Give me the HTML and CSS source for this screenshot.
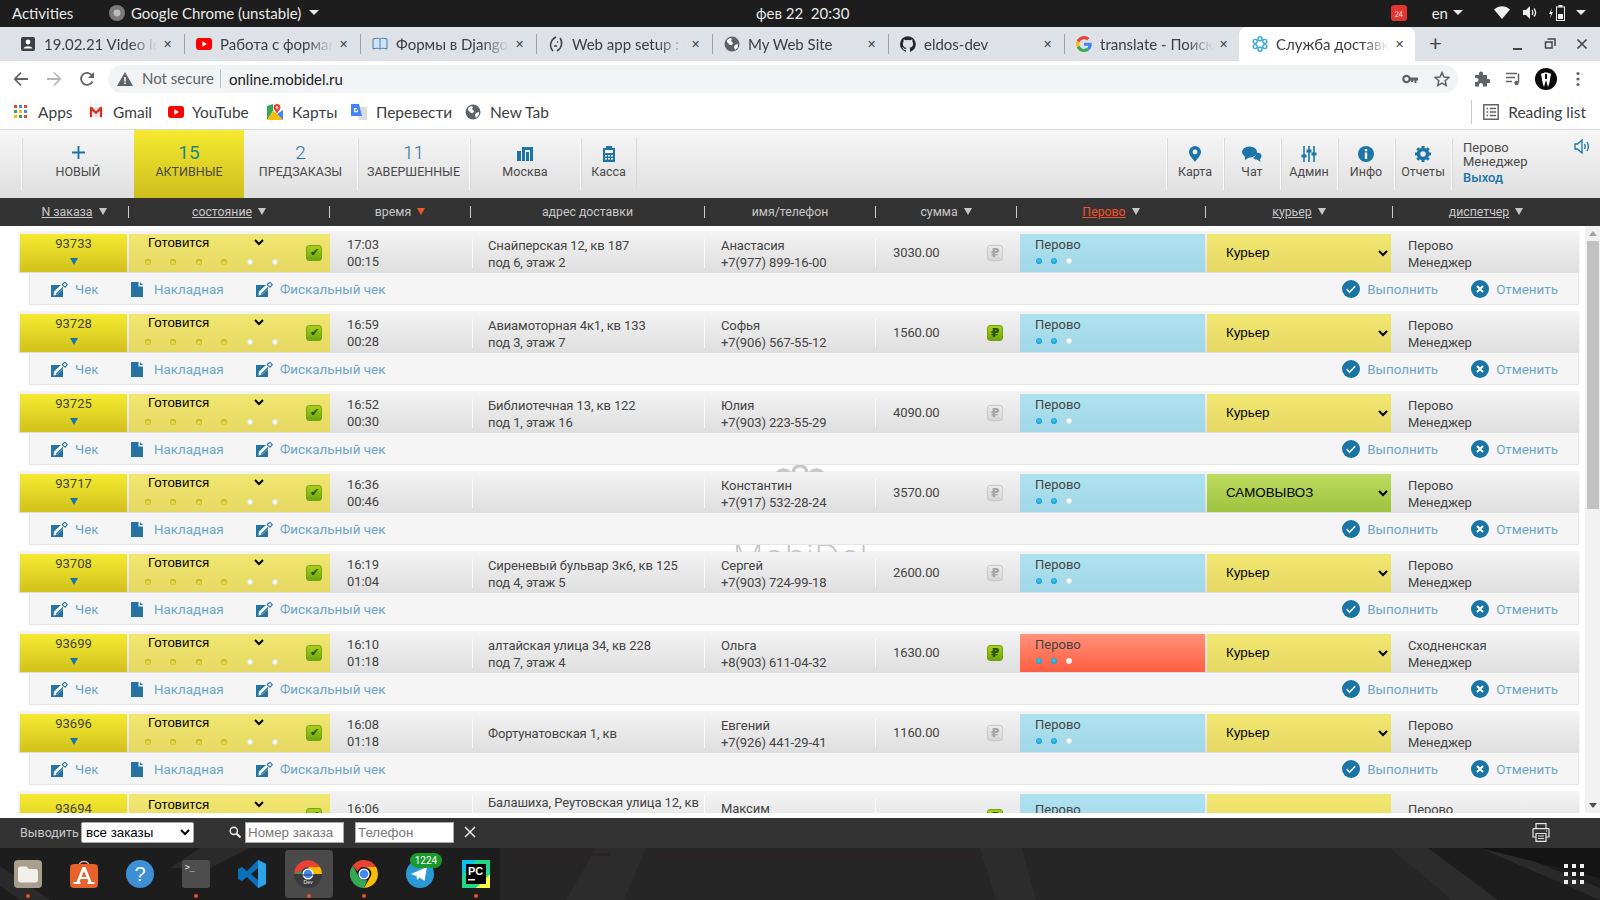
FILE: index.html
```html
<!DOCTYPE html>
<html lang="ru">
<head>
<meta charset="utf-8">
<title>Служба доставки</title>
<link rel="stylesheet" href="styles.css">
</head>
<body>
<svg class="defs" aria-hidden="true">
  <symbol id="i-edit" viewBox="0 0 17 15"><path fill="#2573a5" d="M0 3h12v12H0z"/><path fill="#fff" d="M3 9.500L11 2l3 2.800-8 8-3.500.8z"/><path fill="none" stroke="#2573a5" stroke-width="1.100" d="M11 2.500l3-2.200 2.300 2.400-2.300 2.600-3-2.800M5 12.500l7-7"/></symbol>
  <symbol id="i-doc" viewBox="0 0 12 15"><path fill="#2573a5" d="M0 0h7.500v4.500H12V15H0zM9 0l3 3H9z"/></symbol>
  <symbol id="i-ok" viewBox="0 0 18 18"><circle cx="9" cy="9" r="9" fill="#1a75a5"/><path fill="none" stroke="#fff" stroke-width="1.600" d="M4.600 9.200l3 3 5.600-6"/></symbol>
  <symbol id="i-no" viewBox="0 0 18 18"><circle cx="9" cy="9" r="9" fill="#1a75a5"/><path fill="none" stroke="#fff" stroke-width="2" d="M6 6l6 6M12 6l-6 6"/></symbol>
  <symbol id="i-globe" viewBox="0 0 16 16"><circle cx="8" cy="8" r="7.500" fill="#5f6368"/><path fill="#fff" d="M3 4l3-2 2 1-1 2 2 2-1 2-2 0-3-3zM11 9l3-1 0 3-3 3-1-3z"/></symbol>
  <symbol id="i-yt" viewBox="0 0 16 16"><rect y="2" width="16" height="12" rx="3" fill="#f00"/><path fill="#fff" d="M6.400 5.200L11 8l-4.600 2.800z"/></symbol>
</svg>

<header class="os-bar">
  <span class="os-act">Activities</span>
  <svg class="os-app-ico" viewBox="0 0 16 16"><circle cx="8" cy="8" r="8" fill="#7a7a7a"/><circle cx="8" cy="8" r="3.400" fill="#bbb"/></svg>
  <span class="os-app">Google Chrome (unstable)</span>
  <i class="os-tri os-tri-app"></i>
  <time class="os-clock">фев 22&nbsp; 20:30</time>
  <span class="os-right">
    <span class="os-badge">24</span>
    <span class="os-lang">en</span><i class="os-tri os-tri-lang"></i>
    <svg class="os-wifi" viewBox="0 0 16 13"><path fill="#eee" d="M0 3.500C4.500-1 11.500-1 16 3.500L8 13z"/></svg>
    <svg class="os-vol" viewBox="0 0 15 13"><path fill="#eee" d="M0 4h3l4-4v13L3 9H0z"/><path fill="none" stroke="#eee" stroke-width="1.300" d="M9 4c1 1.500 1 3.500 0 5M11 2.500c2 2.500 2 5.500 0 8"/></svg>
    <svg class="os-bat" viewBox="0 0 18 16"><path fill="#eee" d="M3 3L0 9h2l-1 4 3-6H2l1-4z"/><rect x="7.500" y="2" width="8" height="13.500" fill="none" stroke="#eee"/><rect x="9.500" y="0" width="4" height="2" fill="#eee"/><rect x="9" y="9" width="5" height="5" fill="#eee"/></svg>
    <i class="os-tri os-tri-end"></i>
  </span>
</header>

<nav class="tabs">
  <div class="tab">
    <svg class="fav" viewBox="0 0 16 16"><rect x="1" y="1" width="14" height="14" rx="2" fill="#3c4043"/><circle cx="8" cy="6" r="2.400" fill="#fff"/><path fill="#fff" d="M3.500 12.500c1-3 8-3 9 0z"/></svg>
    <span class="tab-title">19.02.21 Video lesson</span><span class="tab-x">✕</span>
  </div>
  <div class="tab">
    <svg class="fav"><use href="#i-yt"/></svg>
    <span class="tab-title">Работа с формами</span><span class="tab-x">✕</span>
  </div>
  <div class="tab">
    <svg class="fav" viewBox="0 0 16 16"><path fill="#cfe3f5" stroke="#4a7fa8" d="M1 3c3-1 5-1 7 0 2-1 4-1 7 0v10c-3-1-5-1-7 0-2-1-4-1-7 0z"/><path stroke="#4a7fa8" d="M8 3v10"/></svg>
    <span class="tab-title">Формы в Django</span><span class="tab-x">✕</span>
  </div>
  <div class="tab">
    <svg class="fav" viewBox="0 0 16 16"><path fill="none" stroke="#3c4043" stroke-width="1.500" d="M5 15C1 11 2 4 8 1M12 2c3 4 2 10-3 13M9 6l1 0M6 10l3 0"/></svg>
    <span class="tab-title">Web app setup : Django</span><span class="tab-x">✕</span>
  </div>
  <div class="tab">
    <svg class="fav"><use href="#i-globe"/></svg>
    <span class="tab-title">My Web Site</span><span class="tab-x">✕</span>
  </div>
  <div class="tab">
    <svg class="fav" viewBox="0 0 16 16"><path fill="#24292e" d="M8 .2a8 8 0 0 0-2.500 15.600c.4.100.5-.2.500-.4v-1.400c-2.200.5-2.700-1-2.700-1-.4-.9-.9-1.200-.9-1.200-.7-.5.100-.5.100-.5.800.1 1.200.8 1.200.8.700 1.200 1.900.9 2.300.7.100-.5.300-.9.500-1.100-1.800-.2-3.600-.9-3.600-4 0-.9.300-1.600.8-2.100-.1-.2-.4-1 .1-2.100 0 0 .7-.2 2.200.8a7.600 7.600 0 0 1 4 0c1.500-1 2.200-.8 2.200-.8.400 1.100.2 1.900.1 2.100.5.600.8 1.300.8 2.100 0 3.100-1.900 3.700-3.700 3.900.3.300.6.700.6 1.500v2.200c0 .2.100.5.600.4A8 8 0 0 0 8 .2z"/></svg>
    <span class="tab-title">eldos-dev</span><span class="tab-x">✕</span>
  </div>
  <div class="tab">
    <svg class="fav" viewBox="0 0 16 16"><path fill="#4285f4" d="M15.700 8.200c0-.6 0-1-.1-1.500H8v3h4.400c-.2 1-.8 1.900-1.600 2.400l2.500 2c1.500-1.400 2.400-3.400 2.400-5.900z"/><path fill="#34a853" d="M8 16c2.200 0 4-.7 5.300-2l-2.500-1.900c-.7.500-1.600.8-2.800.8-2.100 0-3.900-1.500-4.600-3.400L.8 11.500C2.100 14.200 4.800 16 8 16z"/><path fill="#fbbc05" d="M3.400 9.500a4.900 4.900 0 0 1 0-3L.8 4.500a8 8 0 0 0 0 7z"/><path fill="#ea4335" d="M8 3.200c1.200 0 2.300.4 3.100 1.200l2.300-2.300A8 8 0 0 0 .8 4.500l2.600 2C4.100 4.600 5.900 3.200 8 3.200z"/></svg>
    <span class="tab-title">translate - Поиск в Google</span><span class="tab-x">✕</span>
  </div>
  <div class="tab tab-on">
    <svg class="fav" viewBox="0 0 16 16"><g fill="none" stroke="#35a7dc" stroke-width="1.400"><circle cx="8" cy="2.800" r="2"/><circle cx="8" cy="13.200" r="2"/><circle cx="3.200" cy="5.400" r="2"/><circle cx="12.800" cy="5.400" r="2"/><circle cx="3.200" cy="10.600" r="2"/><circle cx="12.800" cy="10.600" r="2"/></g></svg>
    <span class="tab-title">Служба доставки</span><span class="tab-x">✕</span>
  </div>
  <span class="tab-plus">+</span>
  <span class="win-btns">
    <svg viewBox="0 0 12 12"><path stroke="#444" stroke-width="2" d="M1 11h9"/></svg>
    <svg viewBox="0 0 12 12"><path fill="none" stroke="#444" stroke-width="1.500" d="M3.500 1h7.500v7M1.500 4h6.500v6H1.500z"/></svg>
    <svg viewBox="0 0 12 12"><path stroke="#444" stroke-width="1.700" d="M1.500 1.500l9 9M10.500 1.500l-9 9"/></svg>
  </span>
</nav>

<div class="toolbar">
  <svg class="tb-ico tb-back" viewBox="0 0 16 16"><path fill="none" stroke="#5f6368" stroke-width="1.800" d="M15 8H2M8 1.500L1.800 8 8 14.500"/></svg>
  <svg class="tb-ico tb-fwd" viewBox="0 0 16 16"><path fill="none" stroke="#b5b8bb" stroke-width="1.800" d="M1 8h13M8 1.500L14.200 8 8 14.500"/></svg>
  <svg class="tb-ico tb-rel" viewBox="0 0 16 16"><path fill="none" stroke="#5f6368" stroke-width="1.800" d="M13.500 10.500A6 6 0 1 1 13 4.500"/><path fill="#5f6368" d="M15 1v6H9z"/></svg>
  <div class="omni">
    <svg class="omni-warn" viewBox="0 0 16 14"><path fill="#5f6368" d="M8 0l8 14H0z"/><path fill="#fff" d="M7.200 5h1.600v4.500H7.200zM7.200 10.500h1.600V12H7.200z"/></svg>
    <span class="omni-ns">Not secure</span>
    <span class="omni-url">online.mobidel.ru</span>
    <svg class="omni-key" viewBox="0 0 16 10"><circle cx="4.500" cy="5" r="3.200" fill="none" stroke="#5f6368" stroke-width="2.200"/><path fill="#5f6368" d="M8 3.500h8v3h-1.500V9h-2V6.500H11V8H9V6.500H8z"/></svg>
    <svg class="omni-star" viewBox="0 0 16 16"><path fill="none" stroke="#5f6368" stroke-width="1.500" d="M8 1.500l2 4.500 4.800.5-3.600 3.200 1 4.800L8 12.100l-4.200 2.400 1-4.800L1.200 6.500 6 6z"/></svg>
  </div>
  <svg class="tb-ico tb-puz" viewBox="0 0 16 16"><path fill="#5f6368" d="M1 4h4V2.500a2 2 0 0 1 4 0V4h4v4h1.500a2 2 0 0 1 0 4H13v3.500H9V14a2 2 0 0 0-4 0v1.500H1V11h1.500a2 2 0 0 0 0-4H1z"/></svg>
  <svg class="tb-ico tb-med" viewBox="0 0 16 16"><path fill="none" stroke="#5f6368" stroke-width="1.500" d="M0 2.500h11M0 6.500h9M0 10.500h6M12.500 2.500v9"/><circle cx="10.500" cy="12" r="2.200" fill="#5f6368"/></svg>
  <svg class="tb-ava" viewBox="0 0 22 22"><circle cx="11" cy="11" r="11" fill="#0a0a0a"/><path fill="#fff" d="M6 6c3-2 7-2 10 0-1 4-1 9-3 13l-2-7-2 7C7 15 7 10 6 6z"/><path fill="#0a0a0a" d="M10 6h2v5h-2z"/></svg>
  <svg class="tb-ico tb-dots" viewBox="0 0 4 16"><circle cx="2" cy="2.500" r="1.600" fill="#5f6368"/><circle cx="2" cy="8" r="1.600" fill="#5f6368"/><circle cx="2" cy="13.500" r="1.600" fill="#5f6368"/></svg>
</div>

<div class="bookmarks">
  <span class="bm bm-apps">
    <svg class="bm-ico" viewBox="0 0 14 14"><rect width="3" height="3" fill="#ea4335"/><rect x="5" width="3" height="3" fill="#4285f4"/><rect x="10" width="3" height="3" fill="#ea4335"/><rect y="5" width="3" height="3" fill="#34a853"/><rect x="5" y="5" width="3" height="3" fill="#fbbc05"/><rect x="10" y="5" width="3" height="3" fill="#4285f4"/><rect y="10" width="3" height="3" fill="#fbbc05"/><rect x="5" y="10" width="3" height="3" fill="#34a853"/><rect x="10" y="10" width="3" height="3" fill="#ea4335"/></svg>Apps</span>
  <span class="bm bm-gmail">
    <svg class="bm-ico" viewBox="0 0 16 14"><path fill="#e8e8e8" d="M1 1h14v12H1z"/><path fill="#d93025" d="M1 1h2l5 5 5-5h2v12h-2.500V5.500L8 9.500 3.500 5.500V13H1z"/></svg>Gmail</span>
  <span class="bm bm-yt"><svg class="bm-ico"><use href="#i-yt"/></svg>YouTube</span>
  <span class="bm bm-maps">
    <svg class="bm-ico bm-ico-l" viewBox="0 0 16 16"><path fill="#34a853" d="M0 2l6-2v7L0 16z"/><path fill="#fbbc05" d="M6 7l4 3 6 6H0z"/><path fill="#4285f4" d="M16 16l-6-6 6-4z"/><path fill="#ea4335" d="M10 0a3.500 3.500 0 0 1 3.500 3.500c0 2-2 3-3.500 6-1-2-3.500-4-3.500-6A3.500 3.500 0 0 1 10 0z"/><circle cx="10" cy="3.500" r="1.200" fill="#fff"/></svg>Карты</span>
  <span class="bm bm-tr">
    <svg class="bm-ico bm-ico-l" viewBox="0 0 16 16"><path fill="#dadce0" d="M6 3h10v13H8z"/><path fill="#4285f4" d="M0 0h8l3 12H0z"/><path fill="#fff" d="M3 4h3v1.200H4.200v2H6V5.800h1v2.500H3z"/></svg>Перевести</span>
  <span class="bm bm-new"><svg class="bm-ico bm-ico-l"><use href="#i-globe"/></svg>New Tab</span>
  <span class="bm bm-read">
    <svg class="bm-ico bm-ico-l" viewBox="0 0 14 14"><path fill="none" stroke="#5f6368" stroke-width="1.300" d="M.7.700h12.600v12.600H.7zM6 4h5.500M6 7h5.500M6 10h5.500M3 4h1.500M3 7h1.500M3 10h1.500"/></svg>Reading list</span>
</div>

<section class="app-nav">
  <a class="nav-item nav-new"><svg class="nav-plus" viewBox="0 0 14 14"><path stroke="#1b75a8" stroke-width="2" d="M7 0v14M0 7h14"/></svg><span>НОВЫЙ</span></a>
  <a class="nav-item nav-act"><b>15</b><span>АКТИВНЫЕ</span></a>
  <a class="nav-item nav-pre"><b>2</b><span>ПРЕДЗАКАЗЫ</span></a>
  <a class="nav-item nav-done"><b>11</b><span>ЗАВЕРШЕННЫЕ</span></a>
  <a class="nav-item nav-city"><svg class="nav-ico" viewBox="0 0 16 14"><path fill="#1b75a8" d="M0 4h4v10H0zM5 0h11v14h-3V3H8v11H5zM9 5h3v9H9z"/></svg><span>Москва</span></a>
  <a class="nav-item nav-cash"><svg class="nav-ico" viewBox="0 0 12 16"><path fill="#1b75a8" d="M3 0h6v2h3v14H0V2h3z"/><path fill="#fff" d="M2 4h8v3H2zM2 9h2v1.500H2zM5 9h2v1.500H5zM8 9h2v1.500H8zM2 12h2v1.500H2zM5 12h2v1.500H5zM8 12h2v1.500H8z"/></svg><span>Касса</span></a>
  <span class="nav-fill"></span>
  <a class="nav-item nav-tool"><svg class="nav-ico" viewBox="0 0 12 16"><path fill="#1b75a8" d="M6 0a6 6 0 0 1 6 6c0 3.500-4 7-6 10-2-3-6-6.500-6-10a6 6 0 0 1 6-6z"/><circle cx="6" cy="6" r="2.400" fill="#f0f0f0"/></svg><span>Карта</span></a>
  <a class="nav-item nav-tool"><svg class="nav-ico nav-ico-w" viewBox="0 0 20 16"><ellipse cx="7.500" cy="6" rx="7.500" ry="5.500" fill="#1b75a8"/><path fill="#1b75a8" d="M3 9v5l5-3zM12.500 7.500c3-1.500 7-.5 7 2.500 0 1.500-1 2.500-1.500 3l.5 3-3.500-2.500c-2 0-3.500-.5-4-2 2 0 3.500-2 1.500-4z"/></svg><span>Чат</span></a>
  <a class="nav-item nav-tool"><svg class="nav-ico" viewBox="0 0 16 16"><path stroke="#1b75a8" stroke-width="1.600" d="M3 0v16M8 0v16M13 0v16"/><path stroke="#1b75a8" stroke-width="3" d="M.5 10h5M5.500 5h5M10.500 8h5"/></svg><span>Админ</span></a>
  <a class="nav-item nav-tool"><svg class="nav-ico" viewBox="0 0 16 16"><circle cx="8" cy="8" r="8" fill="#1b75a8"/><path fill="#fff" d="M6.800 6.500h2.400v6.500H6.800zM6.800 3h2.400v2.200H6.800z"/></svg><span>Инфо</span></a>
  <a class="nav-item nav-tool"><svg class="nav-ico" viewBox="0 0 16 16"><circle cx="8" cy="8" r="4.500" fill="none" stroke="#1b75a8" stroke-width="3.500"/><path stroke="#1b75a8" stroke-width="3" d="M8 0v3M8 13v3M0 8h3M13 8h3M2.300 2.300l2.200 2.200M11.500 11.500l2.200 2.200M13.700 2.300l-2.200 2.200M4.500 11.500l-2.200 2.200"/></svg><span>Отчеты</span></a>
  <div class="nav-user"><span>Перово</span><span>Менеджер</span><a class="nav-exit">Выход</a></div>
  <svg class="nav-sound" viewBox="0 0 16 15"><path fill="none" stroke="#1b75a8" stroke-width="1.300" d="M1 5h2.500L8 1v13L3.500 10H1z"/><path fill="none" stroke="#1b75a8" stroke-width="1.300" d="M10.500 5c.8 1.500.8 3.500 0 5M13 3c1.500 2.500 1.500 6.500 0 9"/></svg>
</section>

<div class="thead">
  <span class="th th-num"><u>N заказа</u><i class="tri"></i></span>
  <span class="th th-state"><u>состояние</u><i class="tri"></i></span>
  <span class="th th-time">время<i class="tri tri-red"></i></span>
  <span class="th th-addr">адрес доставки</span>
  <span class="th th-name">имя/телефон</span>
  <span class="th th-sum">сумма<i class="tri"></i></span>
  <span class="th th-rest"><u class="th-red">Перово</u><i class="tri"></i></span>
  <span class="th th-cour"><u>курьер</u><i class="tri"></i></span>
  <span class="th th-disp"><u>диспетчер</u><i class="tri"></i></span>
</div>

<main class="content">
  <div class="list">
    <div class="mark">
      <svg class="mark-logo" viewBox="0 0 60 58"><g fill="none" stroke="#c8c8c8" stroke-width="4"><circle cx="11" cy="16" r="9"/><circle cx="30" cy="10" r="8"/><circle cx="49" cy="16" r="9"/><circle cx="11" cy="46" r="9"/><circle cx="30" cy="48" r="8"/><circle cx="49" cy="46" r="9"/></g></svg>
      <span class="mark-text">MobiDel</span>
    </div>

    <article class="order">
      <div class="row">
        <div class="c-num">93733<i class="tri-down"></i></div>
        <div class="c-state">
          <div class="st-left"><select class="st-sel"><option>Готовится</option></select>
            <div class="dots"><i></i><i></i><i></i><i></i><i class="off"></i><i class="off"></i></div></div>
          <span class="chk">✔</span>
        </div>
        <div class="c-time"><span>17:03</span><span>00:15</span></div>
        <div class="c-text"><span>Снайперская 12, кв 187</span><span>под 6, этаж 2</span></div>
        <div class="c-text c-name"><span>Анастасия</span><span>+7(977) 899-16-00</span></div>
        <div class="c-text c-sum"><span>3030.00</span><b class="rub">₽</b></div>
        <div class="c-rest"><span>Перово</span><div class="rdots"><i></i><i></i><i class="off"></i></div></div>
        <select class="c-cour"><option>Курьер</option></select>
        <div class="c-disp"><span>Перово</span><span>Менеджер</span></div>
      </div>
      <div class="sub">
        <a class="act act-chk"><svg><use href="#i-edit"/></svg>Чек</a>
        <a class="act act-inv"><svg class="ic-doc"><use href="#i-doc"/></svg>Накладная</a>
        <a class="act act-fis"><svg><use href="#i-edit"/></svg>Фискальный чек</a>
        <a class="act act-ok"><svg class="ic-round"><use href="#i-ok"/></svg>Выполнить</a>
        <a class="act act-no"><svg class="ic-round"><use href="#i-no"/></svg>Отменить</a>
      </div>
    </article>

    <article class="order">
      <div class="row">
        <div class="c-num">93728<i class="tri-down"></i></div>
        <div class="c-state">
          <div class="st-left"><select class="st-sel"><option>Готовится</option></select>
            <div class="dots"><i></i><i></i><i></i><i></i><i class="off"></i><i class="off"></i></div></div>
          <span class="chk">✔</span>
        </div>
        <div class="c-time"><span>16:59</span><span>00:28</span></div>
        <div class="c-text"><span>Авиамоторная 4к1, кв 133</span><span>под 3, этаж 7</span></div>
        <div class="c-text c-name"><span>Софья</span><span>+7(906) 567-55-12</span></div>
        <div class="c-text c-sum"><span>1560.00</span><b class="rub rub-on">₽</b></div>
        <div class="c-rest"><span>Перово</span><div class="rdots"><i></i><i></i><i class="off"></i></div></div>
        <select class="c-cour"><option>Курьер</option></select>
        <div class="c-disp"><span>Перово</span><span>Менеджер</span></div>
      </div>
      <div class="sub">
        <a class="act act-chk"><svg><use href="#i-edit"/></svg>Чек</a>
        <a class="act act-inv"><svg class="ic-doc"><use href="#i-doc"/></svg>Накладная</a>
        <a class="act act-fis"><svg><use href="#i-edit"/></svg>Фискальный чек</a>
        <a class="act act-ok"><svg class="ic-round"><use href="#i-ok"/></svg>Выполнить</a>
        <a class="act act-no"><svg class="ic-round"><use href="#i-no"/></svg>Отменить</a>
      </div>
    </article>

    <article class="order">
      <div class="row">
        <div class="c-num">93725<i class="tri-down"></i></div>
        <div class="c-state">
          <div class="st-left"><select class="st-sel"><option>Готовится</option></select>
            <div class="dots"><i></i><i></i><i></i><i></i><i class="off"></i><i class="off"></i></div></div>
          <span class="chk">✔</span>
        </div>
        <div class="c-time"><span>16:52</span><span>00:30</span></div>
        <div class="c-text"><span>Библиотечная 13, кв 122</span><span>под 1, этаж 16</span></div>
        <div class="c-text c-name"><span>Юлия</span><span>+7(903) 223-55-29</span></div>
        <div class="c-text c-sum"><span>4090.00</span><b class="rub">₽</b></div>
        <div class="c-rest"><span>Перово</span><div class="rdots"><i></i><i></i><i class="off"></i></div></div>
        <select class="c-cour"><option>Курьер</option></select>
        <div class="c-disp"><span>Перово</span><span>Менеджер</span></div>
      </div>
      <div class="sub">
        <a class="act act-chk"><svg><use href="#i-edit"/></svg>Чек</a>
        <a class="act act-inv"><svg class="ic-doc"><use href="#i-doc"/></svg>Накладная</a>
        <a class="act act-fis"><svg><use href="#i-edit"/></svg>Фискальный чек</a>
        <a class="act act-ok"><svg class="ic-round"><use href="#i-ok"/></svg>Выполнить</a>
        <a class="act act-no"><svg class="ic-round"><use href="#i-no"/></svg>Отменить</a>
      </div>
    </article>

    <article class="order">
      <div class="row">
        <div class="c-num">93717<i class="tri-down"></i></div>
        <div class="c-state">
          <div class="st-left"><select class="st-sel"><option>Готовится</option></select>
            <div class="dots"><i></i><i></i><i></i><i></i><i class="off"></i><i class="off"></i></div></div>
          <span class="chk">✔</span>
        </div>
        <div class="c-time"><span>16:36</span><span>00:46</span></div>
        <div class="c-text"></div>
        <div class="c-text c-name"><span>Константин</span><span>+7(917) 532-28-24</span></div>
        <div class="c-text c-sum"><span>3570.00</span><b class="rub">₽</b></div>
        <div class="c-rest"><span>Перово</span><div class="rdots"><i></i><i></i><i class="off"></i></div></div>
        <select class="c-cour c-cour-self"><option>САМОВЫВОЗ</option></select>
        <div class="c-disp"><span>Перово</span><span>Менеджер</span></div>
      </div>
      <div class="sub">
        <a class="act act-chk"><svg><use href="#i-edit"/></svg>Чек</a>
        <a class="act act-inv"><svg class="ic-doc"><use href="#i-doc"/></svg>Накладная</a>
        <a class="act act-fis"><svg><use href="#i-edit"/></svg>Фискальный чек</a>
        <a class="act act-ok"><svg class="ic-round"><use href="#i-ok"/></svg>Выполнить</a>
        <a class="act act-no"><svg class="ic-round"><use href="#i-no"/></svg>Отменить</a>
      </div>
    </article>

    <article class="order">
      <div class="row">
        <div class="c-num">93708<i class="tri-down"></i></div>
        <div class="c-state">
          <div class="st-left"><select class="st-sel"><option>Готовится</option></select>
            <div class="dots"><i></i><i></i><i></i><i></i><i class="off"></i><i class="off"></i></div></div>
          <span class="chk">✔</span>
        </div>
        <div class="c-time"><span>16:19</span><span>01:04</span></div>
        <div class="c-text"><span>Сиреневый бульвар 3к6, кв 125</span><span>под 4, этаж 5</span></div>
        <div class="c-text c-name"><span>Сергей</span><span>+7(903) 724-99-18</span></div>
        <div class="c-text c-sum"><span>2600.00</span><b class="rub">₽</b></div>
        <div class="c-rest"><span>Перово</span><div class="rdots"><i></i><i></i><i class="off"></i></div></div>
        <select class="c-cour"><option>Курьер</option></select>
        <div class="c-disp"><span>Перово</span><span>Менеджер</span></div>
      </div>
      <div class="sub">
        <a class="act act-chk"><svg><use href="#i-edit"/></svg>Чек</a>
        <a class="act act-inv"><svg class="ic-doc"><use href="#i-doc"/></svg>Накладная</a>
        <a class="act act-fis"><svg><use href="#i-edit"/></svg>Фискальный чек</a>
        <a class="act act-ok"><svg class="ic-round"><use href="#i-ok"/></svg>Выполнить</a>
        <a class="act act-no"><svg class="ic-round"><use href="#i-no"/></svg>Отменить</a>
      </div>
    </article>

    <article class="order">
      <div class="row">
        <div class="c-num">93699<i class="tri-down"></i></div>
        <div class="c-state">
          <div class="st-left"><select class="st-sel"><option>Готовится</option></select>
            <div class="dots"><i></i><i></i><i></i><i></i><i class="off"></i><i class="off"></i></div></div>
          <span class="chk">✔</span>
        </div>
        <div class="c-time"><span>16:10</span><span>01:18</span></div>
        <div class="c-text"><span>алтайская улица 34, кв 228</span><span>под 7, этаж 4</span></div>
        <div class="c-text c-name"><span>Ольга</span><span>+8(903) 611-04-32</span></div>
        <div class="c-text c-sum"><span>1630.00</span><b class="rub rub-on">₽</b></div>
        <div class="c-rest c-rest-late"><span>Перово</span><div class="rdots"><i></i><i></i><i class="off"></i></div></div>
        <select class="c-cour"><option>Курьер</option></select>
        <div class="c-disp"><span>Сходненская</span><span>Менеджер</span></div>
      </div>
      <div class="sub">
        <a class="act act-chk"><svg><use href="#i-edit"/></svg>Чек</a>
        <a class="act act-inv"><svg class="ic-doc"><use href="#i-doc"/></svg>Накладная</a>
        <a class="act act-fis"><svg><use href="#i-edit"/></svg>Фискальный чек</a>
        <a class="act act-ok"><svg class="ic-round"><use href="#i-ok"/></svg>Выполнить</a>
        <a class="act act-no"><svg class="ic-round"><use href="#i-no"/></svg>Отменить</a>
      </div>
    </article>

    <article class="order">
      <div class="row">
        <div class="c-num">93696<i class="tri-down"></i></div>
        <div class="c-state">
          <div class="st-left"><select class="st-sel"><option>Готовится</option></select>
            <div class="dots"><i></i><i></i><i></i><i></i><i class="off"></i><i class="off"></i></div></div>
          <span class="chk">✔</span>
        </div>
        <div class="c-time"><span>16:08</span><span>01:18</span></div>
        <div class="c-text"><span>Фортунатовская 1, кв</span></div>
        <div class="c-text c-name"><span>Евгений</span><span>+7(926) 441-29-41</span></div>
        <div class="c-text c-sum"><span>1160.00</span><b class="rub">₽</b></div>
        <div class="c-rest"><span>Перово</span><div class="rdots"><i></i><i></i><i class="off"></i></div></div>
        <select class="c-cour"><option>Курьер</option></select>
        <div class="c-disp"><span>Перово</span><span>Менеджер</span></div>
      </div>
      <div class="sub">
        <a class="act act-chk"><svg><use href="#i-edit"/></svg>Чек</a>
        <a class="act act-inv"><svg class="ic-doc"><use href="#i-doc"/></svg>Накладная</a>
        <a class="act act-fis"><svg><use href="#i-edit"/></svg>Фискальный чек</a>
        <a class="act act-ok"><svg class="ic-round"><use href="#i-ok"/></svg>Выполнить</a>
        <a class="act act-no"><svg class="ic-round"><use href="#i-no"/></svg>Отменить</a>
      </div>
    </article>

    <article class="order">
      <div class="row row-tall">
        <div class="c-num">93694<i class="tri-down"></i></div>
        <div class="c-state">
          <div class="st-left"><select class="st-sel"><option>Готовится</option></select>
            <div class="dots"><i></i><i></i><i></i><i></i><i class="off"></i><i class="off"></i></div></div>
          <span class="chk">✔</span>
        </div>
        <div class="c-time"><span>16:06</span></div>
        <div class="c-text"><span>Балашиха, Реутовская улица 12, кв</span></div>
        <div class="c-text c-name"><span>Максим</span></div>
        <div class="c-text c-sum"><b class="rub rub-on">₽</b></div>
        <div class="c-rest"><span>Перово</span></div>
        <select class="c-cour"><option></option></select>
        <div class="c-disp"><span>Перово</span></div>
      </div>
    </article>
  </div>
  <div class="scroll">
    <i class="sc-up"></i>
    <div class="sc-track"><div class="sc-thumb"></div></div>
    <i class="sc-down"></i>
  </div>
</main>

<footer class="bottom">
  <label class="bt-label">Выводить</label>
  <select class="bt-sel"><option>все заказы</option></select>
  <svg class="bt-search" viewBox="0 0 12 12"><circle cx="4.800" cy="4.800" r="3.600" fill="none" stroke="#eee" stroke-width="1.500"/><path stroke="#eee" stroke-width="2" d="M7.500 7.500l4 4"/></svg>
  <input class="bt-in" placeholder="Номер заказа">
  <input class="bt-in bt-in2" placeholder="Телефон">
  <svg class="bt-x" viewBox="0 0 12 12"><path stroke="#eee" stroke-width="1.500" d="M1 1l10 10M11 1L1 11"/></svg>
  <svg class="bt-print" viewBox="0 0 18 19"><g fill="none" stroke="#e8e8e8" stroke-width="1.200"><path d="M4 6V.7h10V6M4 14H1V6.500c0-.5.300-.8.800-.8h14.400c.5 0 .8.300.8.800V14h-3"/><path d="M4 10.500h10v7.800H4zM6 13h6M6 15.500h6"/></g><circle cx="14.500" cy="8" r=".7" fill="#e8e8e8"/></svg>
</footer>

<div class="dock">
  <svg class="dock-bg" viewBox="0 0 1600 52" preserveAspectRatio="none" aria-hidden="true">
    <rect width="1600" height="52" fill="#1d1d1d"/>
    <path fill="#262626" d="M500 0h890l90 52H500z"/>
    <path fill="#2c2c2c" d="M596 0h50l-22 52h-58zM980 0h42l14 52h-40zM1390 0h38l70 52h-46z"/>
    <path fill="#2a2424" d="M500 5h110v3H500zM648 6h330v3H648zM1026 8h330v2H1026z"/>
    <path fill="#2a2a2a" d="M0 18L50 52H20L0 38zM200 0h50l-40 20h-40zM1500 0l100 40v12L1480 0z"/>
    <path fill="#141414" d="M1480 0h120v30z"/>
  </svg>
  <span class="dock-item">
    <svg viewBox="0 0 28 28"><rect width="28" height="28" rx="4" fill="#a89f8e"/><path fill="#f1efe9" d="M4 9c0-1.500 1-2.500 2.500-2.500h6l2.500 2.500h6.500C23 9 24 10 24 11.500V20c0 1.500-1 2.500-2.500 2.500h-15C5 22.500 4 21.500 4 20z"/></svg>
    <i class="pip"></i>
  </span>
  <span class="dock-item">
    <svg viewBox="0 0 28 28"><path fill="none" stroke="#f0a585" stroke-width="1.500" d="M9 6c0-6 10-6 10 0"/><rect y="4" width="28" height="24" rx="4" fill="#e8622c"/><path fill="#fff" d="M12.500 7h3l6 15h3v2h-7v-2h1l-1-3h-7l-1 3h1v2h-7v-2h3zM14 11l-2.500 6h5z"/></svg>
  </span>
  <span class="dock-item">
    <svg viewBox="0 0 28 28"><circle cx="14" cy="14" r="14" fill="#3d8fd6"/><text x="14" y="21" font-size="20" font-family="Liberation Sans" fill="#fff" text-anchor="middle">?</text></svg>
  </span>
  <span class="dock-item">
    <svg viewBox="0 0 28 28"><rect width="28" height="28" rx="3" fill="#4d4d4d"/><text x="3" y="10" font-size="8" font-family="DejaVu Sans Mono" fill="#eee">&gt;_</text></svg>
    <i class="pip"></i>
  </span>
  <span class="dock-item">
    <svg viewBox="0 0 28 28"><path fill="#0a6fb8" d="M20 0l8 4v20l-8 4-11-11-5 4-4-2V9l4-2 5 4zM20 8l-7 6 7 6z"/><path fill="#2da3ea" d="M20 0l8 4v20l-8 4z"/></svg>
  </span>
  <span class="dock-item dock-on">
    <svg viewBox="0 0 28 28"><path fill="#ea4335" d="M0 14a14 14 0 0 1 26-7H14a7 7 0 0 0-6.500 4z"/><path fill="#fbbc05" d="M14 7h12a14 14 0 0 1 2 7h-9z"/><path fill="#34a853" d="M0 14l7.500-3L7 14z"/><path fill="#3a3a3a" d="M0 14h28a14 14 0 0 1-28 0z"/><circle cx="14" cy="14" r="5.500" fill="#fff"/><circle cx="14" cy="14" r="4.300" fill="#4285f4"/><path fill="#3a3a3a" d="M0 14.500h28v1H0z"/><text x="14" y="24" font-size="5" font-family="Liberation Sans" fill="#eee" text-anchor="middle">Dev</text></svg>
    <i class="pip"></i>
  </span>
  <span class="dock-item">
    <svg viewBox="0 0 28 28"><path fill="#ea4335" d="M14 0a14 14 0 0 1 12.100 7H14a7 7 0 0 0-6.500 4.500L2.700 5.700A14 14 0 0 1 14 0z"/><path fill="#fbbc05" d="M26.100 7A14 14 0 0 1 14 28l6-10.500A7 7 0 0 0 20 9.500 7 7 0 0 0 14 7z"/><path fill="#34a853" d="M2.700 5.700l6 10.500a7 7 0 0 0 8.500 3.800L14 28A14 14 0 0 1 2.700 5.700z"/><circle cx="14" cy="14" r="5.500" fill="#fff"/><circle cx="14" cy="14" r="4.300" fill="#4285f4"/></svg>
    <i class="pip"></i>
  </span>
  <span class="dock-item">
    <svg viewBox="0 0 28 28"><circle cx="14" cy="14" r="14" fill="#2a9ad6"/><path fill="#fff" d="M5 14l16-7-2.500 14-5-3.500-2.500 2.500-.6-4.500L19 9l-9 7z"/></svg>
    <b class="tg-badge">1224</b>
  </span>
  <span class="dock-item">
    <svg viewBox="0 0 28 28"><path fill="#21d789" d="M0 0h28v28H0z"/><path fill="#fcf84a" d="M28 0v14L14 28h14z"/><path fill="#07c3f2" d="M0 0h14L0 14z"/><rect x="4" y="4" width="20" height="20" fill="#000"/><text x="6" y="15" font-size="11" font-weight="700" font-family="Liberation Sans" fill="#fff">PC</text><rect x="6" y="19" width="7" height="1.500" fill="#fff"/></svg>
    <i class="pip"></i>
  </span>
  <svg class="dock-grid" viewBox="0 0 20 20"><g fill="#eee"><rect width="4" height="4"/><rect x="8" width="4" height="4"/><rect x="16" width="4" height="4"/><rect y="8" width="4" height="4"/><rect x="8" y="8" width="4" height="4"/><rect x="16" y="8" width="4" height="4"/><rect y="16" width="4" height="4"/><rect x="8" y="16" width="4" height="4"/><rect x="16" y="16" width="4" height="4"/></g></svg>
</div>
</body>
</html>
```

FILE: styles.css
```css
* { box-sizing: border-box; }
html, body { margin: 0; height: 900px; overflow: hidden; }
body { display: flex; flex-direction: column; width: 1600px; background: #fff; font-family: Roboto, "Liberation Sans", sans-serif; font-size: 13px; color: #444; }
.defs { width: 0; height: 0; position: absolute; }
svg { display: block; flex: none; }
i { display: block; font-style: normal; }
a { display: block; }

/* system bar */
.os-bar { height: 27px; flex: none; background: #1d1d1d; color: #e9e9e9; display: flex; align-items: center; font-family: Lato, "Open Sans", sans-serif; font-size: 15px; padding: 0 0 2px 12px; position: relative; }
.os-act { width: 97px; }
.os-app-ico { width: 16px; height: 16px; margin-right: 6px; }
.os-app { width: 178px; }
.os-tri { width: 0; height: 0; border-left: 5px solid transparent; border-right: 5px solid transparent; border-top: 5px solid #e9e9e9; }
.os-clock { position: absolute; left: 756px; }
.os-right { margin-left: auto; display: flex; align-items: center; padding-right: 14px; }
.os-badge { width: 16px; height: 16px; background: #e5352e; border-radius: 3px; font-size: 7px; line-height: 18px; text-align: center; margin-right: 25px; }
.os-lang { margin-right: 5px; }
.os-tri-lang { margin-right: 31px; }
.os-wifi { width: 16px; height: 13px; margin-right: 13px; }
.os-vol { width: 15px; height: 13px; margin-right: 11px; }
.os-bat { width: 18px; height: 16px; margin-right: 9px; }

/* tabs */
.tabs { height: 34px; flex: none; background: #dee1e6; display: flex; padding-left: 7px; font-family: Lato, "Open Sans", sans-serif; font-size: 15px; color: #3c4043; position: relative; }
.tab { width: 176px; display: flex; align-items: center; padding-left: 13px; position: relative; }
.tab::after { content: ""; position: absolute; right: -2px; top: 7px; height: 20px; width: 1px; background: #9ea1a6; }
.tab:nth-of-type(8)::after, .tab:nth-of-type(7)::after { display: none; }
.tab-on { background: #fff; border-radius: 8px 8px 0 0; color: #3c4043; }
.fav { width: 16px; height: 16px; margin-right: 8px; }
.tab-title { width: 113px; white-space: nowrap; overflow: hidden; -webkit-mask-image: linear-gradient(90deg, #000 76%, transparent 100%); mask-image: linear-gradient(90deg, #000 76%, transparent 100%); }
.tab-x { margin-left: 3px; font-size: 11px; color: #444; width: 14px; text-align: center; }
.tab-plus { font-size: 22px; font-weight: 400; margin-left: 14px; line-height: 32px; color: #444; }
.win-btns { margin-left: auto; display: flex; gap: 20px; align-items: center; padding-right: 12px; }
.win-btns svg { width: 12px; height: 12px; }

/* toolbar */
.toolbar { height: 35px; flex: none; background: #fff; display: flex; align-items: center; padding-left: 13px; }
.tb-ico { width: 16px; height: 16px; }
.tb-back, .tb-fwd { margin-right: 17px; }
.tb-rel { margin-right: 13px; }
.omni { width: 1350px; height: 28px; background: #f1f3f4; border-radius: 14px; display: flex; align-items: center; padding-left: 9px; font-family: Lato, "Open Sans", sans-serif; font-size: 15px; }
.omni-warn { width: 16px; height: 14px; margin-right: 9px; }
.omni-ns { color: #5f6368; width: 79px; border-right: 1px solid #b8babd; line-height: 19px; margin-right: 8px; }
.omni-url { color: #202124; }
.omni-key { width: 16px; height: 10px; margin-left: auto; margin-right: 16px; }
.omni-star { width: 16px; height: 16px; margin-right: 8px; }
.tb-puz { margin-left: 16px; }
.tb-med { margin-left: 16px; }
.tb-ava { width: 22px; height: 22px; margin-left: 13px; }
.tb-dots { width: 4px; margin-left: 19px; }

/* bookmarks */
.bookmarks { height: 34px; flex: none; background: #fff; border-bottom: 1px solid #d8dadd; display: flex; align-items: center; padding: 0 0 2px 14px; font-family: Lato, "Open Sans", sans-serif; font-size: 15.500px; color: #3c4043; }
.bm { display: flex; align-items: center; white-space: nowrap; }
.bm-ico { width: 14px; height: 14px; margin-right: 10px; }
.bm-ico-l { width: 16px; height: 16px; margin-right: 9px; }
.bm-apps { width: 75px; }
.bm-gmail { width: 79px; }
.bm-yt { width: 99px; }
.bm-yt .bm-ico { width: 16px; height: 16px; margin-right: 8px; }
.bm-maps { width: 84px; }
.bm-tr { width: 114px; }
.bm-new { margin-right: auto; }
.bm-read { border-left: 1px solid #c9cbce; height: 24px; padding-left: 11px; padding-right: 14px; }

/* app nav */
.app-nav { height: 68px; flex: none; display: flex; align-items: stretch; background: linear-gradient(#f6f6f6, #dfdfdf); padding-left: 21px; font-size: 12.500px; color: #4a4a4a; }
.nav-item { display: flex; flex-direction: column; align-items: center; justify-content: flex-end; padding-bottom: 9px; margin: 8px 0 8px; border-left: 1px solid #fbfbfb; box-shadow: inset 1px 0 0 #d9d9d9; white-space: nowrap; }
.nav-item b { font-weight: 300; font-size: 19px; line-height: 24px; color: #1b75a8; margin-bottom: -3px; }
.nav-item span { line-height: 19px; }
.nav-new { width: 113px; }
.nav-act { width: 110px; margin: 0; padding-bottom: 17px; border: 0; box-shadow: none; background: linear-gradient(#f5ea30, #cdbe1c); }
.nav-act b { color: #1f8a7c; font-weight: 400; }
.nav-pre { width: 113px; border-left: 0; box-shadow: none; }
.nav-done { width: 112px; }
.nav-city { width: 111px; }
.nav-cash { width: 57px; border-right: 1px solid #d9d9d9; }
.nav-fill { flex: 1; }
.nav-tool { width: 57px; }
.nav-ico { width: 16px; height: 16px; margin-bottom: 0; }
.nav-ico-w { width: 20px; }
.nav-plus { width: 13px; height: 13px; margin-bottom: 3px; }
.nav-user { width: 139px; display: flex; flex-direction: column; padding: 3px 0 0 11px; line-height: 14px; font-size: 13px; margin: 8px 0; border-left: 1px solid #fbfbfb; box-shadow: inset 1px 0 0 #d9d9d9; }
.nav-exit { color: #1b75a8; font-weight: 500; line-height: 18px; }
.nav-sound { width: 16px; height: 15px; margin: 9px 10px 0 -16px; }

/* table head */
.thead { height: 28px; flex: none; background: #333; color: #c8c8c8; display: grid; grid-template-columns: 128px 201px 141px 234px 171px 141px 189px 187px 187px; align-items: center; font-size: 12.300px; text-align: center; padding-bottom: 1px; }
.th { display: flex; justify-content: center; align-items: center; gap: 6px; height: 12px; border-left: 1px solid #ccc; }
.th-num { border-left: 0; padding-left: 20px; }
.th-red { color: #f4502c; }
.tri { width: 0; height: 0; border-left: 4px solid transparent; border-right: 4px solid transparent; border-top: 7px solid #c8c8c8; margin-top: -1px; }
.tri-red { border-top-color: #ec5a2c; }

/* content */
.content { height: 587px; flex: none; display: flex; overflow: hidden; }
.list { width: 1585px; flex: none; padding: 6px 6px 0 19px; position: relative; overflow: hidden; }
.mark { position: absolute; left: 700px; top: 238px; width: 200px; display: flex; flex-direction: column; align-items: center; }
.mark-logo { width: 52px; height: 50px; }
.mark-text { font-family: "Open Sans", sans-serif; font-weight: 300; font-size: 36px; line-height: 60px; color: #c4c4c4; margin-top: 13px; }
.order { position: relative; height: 80px; }
.row { height: 41px; display: grid; grid-template-columns: 107px 203px 142px 232px 171px 141px 191px 184px 188px; grid-template-rows: 38px; padding: 2px 0 1px 1px; background: linear-gradient(#f3f3f3, #dedede); box-shadow: 0 0 1px #bbb; width: 1560px; }
.row-tall { height: 49px; grid-template-rows: 46px; }
.c-num { background: linear-gradient(#f5ea30, #d1c21d); display: flex; flex-direction: column; align-items: center; padding-top: 1px; line-height: 18px; font-size: 13px; }
.row-tall .c-num { padding-top: 6px; }
.tri-down { width: 0; height: 0; border-left: 4px solid transparent; border-right: 4px solid transparent; border-top: 7px solid #1b75a8; margin-top: 5px; }
.c-state { margin-left: 2px; background: linear-gradient(#f1e670, #e5d964); display: flex; justify-content: space-between; align-items: flex-start; padding-right: 8px; }
.st-left { display: flex; flex-direction: column; }
.st-sel { width: 138px; height: 16px; border: 0; background: transparent; font-family: "Liberation Sans", sans-serif; font-size: 13.330px; color: #000; padding-left: 15px; margin: 0 0 2px; }
.row-tall .st-sel { margin-top: 2px; }
.dots { display: flex; gap: 19.400px; padding: 7px 0 0 16px; }
.dots i { width: 6px; height: 6px; border-radius: 50%; background: radial-gradient(circle at 50% 60%, #e8dc3c 25%, #a3951a 90%); }
.dots i.off { background: radial-gradient(circle at 50% 50%, #fff 30%, #c4c4ac 90%); }
.chk { width: 16px; height: 16px; border-radius: 3px; background: linear-gradient(#a9d21c, #6fa40e); border: 1px solid #6fa40e; color: #1f4a00; font-size: 11px; line-height: 14px; text-align: center; margin-top: 11px; }
.row-tall .chk { margin-top: 14px; }
.c-time, .c-text, .c-disp { display: flex; flex-direction: column; justify-content: center; line-height: 17px; font-size: 13px; white-space: nowrap; letter-spacing: -.1px; }
.c-time { padding: 0 0 0 17px; }
.c-text { padding-left: 15px; margin: 5px 0 4px; border-left: 1px solid #fbfbfb; }
.c-name { padding-left: 16px; }
.c-sum { flex-direction: row; align-items: center; justify-content: space-between; padding: 0 13px 0 17px; margin: 4px 0 5px; }
.rub { width: 16px; height: 16px; border-radius: 3px; border: 1px solid #c9c9c9; background: linear-gradient(#ececec, #d5d5d5); color: #a5a5a5; font-size: 12px; line-height: 14px; text-align: center; font-family: "DejaVu Sans", sans-serif; margin-left: auto; }
.rub-on { background: linear-gradient(#a9d21c, #6fa40e); border-color: #6fa40e; color: #2a5200; }
.c-rest { margin: 0 2px 0 4px; padding: 2px 0 0 15px; background: linear-gradient(#aee2f1, #a2d7e6); line-height: 18px; font-size: 13px; }
.row-tall .c-rest { padding-top: 7px; }
.c-rest-late { background: linear-gradient(#ff9179, #ff5e42); }
.rdots { display: flex; gap: 9px; padding: 4px 0 0 1px; }
.rdots i { width: 6px; height: 6px; border-radius: 50%; background: radial-gradient(circle at 50% 40%, #3fc7ee, #0a8fc0); }
.rdots i.off { background: radial-gradient(circle at 50% 40%, #fff, #d5d5d5); }
.c-cour { border: 0; background: linear-gradient(#f1e670, #e5d964); font-family: "Liberation Sans", sans-serif; font-size: 13.330px; color: #000; padding: 0 0 2px 15px; height: 38px; margin: 0; width: 184px; }
.row-tall .c-cour { height: 46px; }
.c-cour-self { background: linear-gradient(#bedb60, #9dc33f); }
.c-disp { padding: 1px 0 0 17px; }
.row-tall .c-time { justify-content: flex-start; padding-top: 6px; }
.row-tall .c-disp { justify-content: flex-start; padding-top: 7px; }
.row-tall .c-text { justify-content: flex-start; margin-top: 0; }
.row-tall .c-name { padding-top: 6px; }
.row-tall .c-sum { align-items: center; margin: 4px 0 5px; }
.sub { height: 32px; margin-left: 10px; width: 1550px; background: #f5f5f5; border: 1px solid #e6e6e6; border-top: 0; display: flex; align-items: center; padding-top: 1px; font-size: 13.400px; color: #6aa6c9; }
.act { display: flex; align-items: center; white-space: nowrap; }
.act svg { width: 17px; height: 15px; margin-right: 7px; }
.act .ic-doc { width: 12px; margin-right: 11px; }
.act .ic-round { width: 18px; height: 18px; margin-right: 7px; }
.act-chk { margin-left: 21px; width: 80px; }
.act-inv { width: 125px; }
.act-ok { margin-left: auto; margin-right: 33px; }
.act-no { margin-right: 20px; }

/* scrollbar */
.scroll { width: 15px; flex: none; background: #f1f1f1; display: flex; flex-direction: column; align-items: center; }
.sc-up, .sc-down { width: 0; height: 0; border-left: 4px solid transparent; border-right: 4px solid transparent; margin: 5px 0; }
.sc-up { border-bottom: 5px solid #a3a3a3; }
.sc-down { border-top: 5px solid #505050; margin-top: auto; }
.sc-track { height: 283px; width: 100%; padding: 0 1px 0 2px; }
.sc-thumb { height: 268px; background: #c1c1c1; }

/* bottom */
.bottom { margin-top: 5px; height: 30px; flex: none; background: #333; display: flex; align-items: center; padding: 0 0 2px 20px; color: #c8c8c8; font-size: 12.500px; }
.bt-label { width: 61px; }
.bt-sel { width: 113px; height: 21px; border: 1px solid #aaa; border-radius: 2px; background: #fff; font-family: "Liberation Sans", sans-serif; font-size: 13.330px; color: #000; padding: 0; }
.bt-search { width: 12px; height: 12px; margin: 0 4px 0 35px; }
.bt-in { width: 99px; height: 21px; border: 1px solid #aaa; background: #fff; font-family: "Liberation Sans", sans-serif; font-size: 13.330px; padding: 1px 2px; }
.bt-in::placeholder { color: #777; }
.bt-in2 { margin-left: 11px; }
.bt-x { width: 12px; height: 12px; margin-left: 10px; }
.bt-print { width: 18px; height: 19px; margin-left: auto; margin-right: 50px; }

/* dock */
.dock { height: 52px; flex: none; display: flex; align-items: center; padding-left: 14px; position: relative; background: #1d1d1d; }
.dock-bg { position: absolute; left: 0; top: 0; width: 1600px; height: 52px; }
.dock-item { width: 56px; height: 48px; display: flex; flex-direction: column; align-items: flex-start; position: relative; }
.dock-item svg { width: 28px; height: 28px; margin-top: 10px; }
.dock-on { background: #4a4a4a; border-radius: 4px; margin-left: -9px; margin-right: 17px; padding-left: 9px; width: 48px; }
.pip { position: absolute; left: 12px; bottom: 0; width: 4px; height: 4px; border-radius: 50%; background: #e95420; }
.dock-on .pip { left: 22px; }
.tg-badge { position: absolute; left: 4px; top: 3px; width: 32px; height: 15px; border-radius: 8px; background: #1a9a2c; color: #fff; font-size: 10px; font-weight: 400; line-height: 15px; text-align: center; }
.dock-grid { width: 20px; height: 20px; margin-left: auto; margin-right: 16px; position: relative; }
```
